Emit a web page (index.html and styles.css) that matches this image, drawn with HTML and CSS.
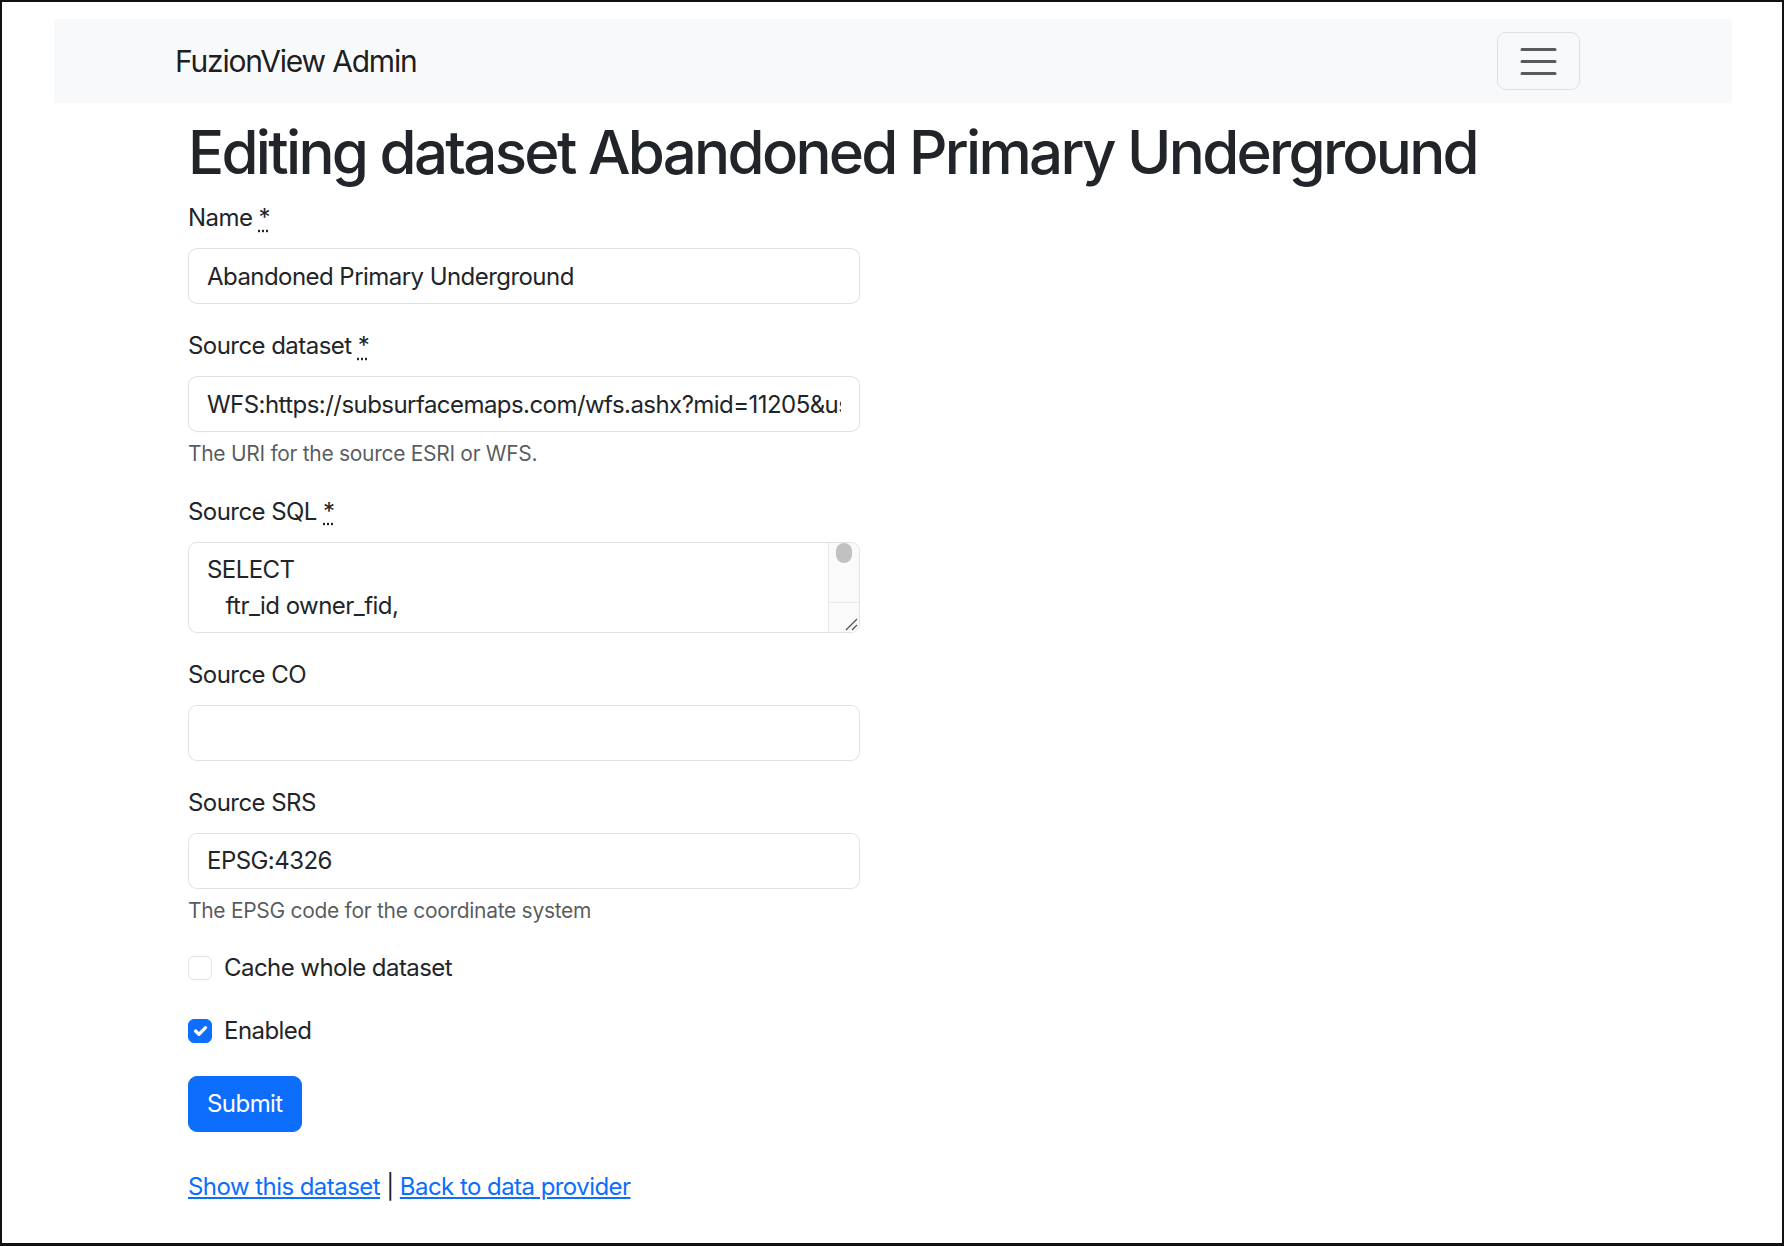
FILE: index.html
```html
<!DOCTYPE html>
<html lang="en">
<head>
<meta charset="utf-8">
<title>FuzionView Admin</title>
<link rel="stylesheet" href="styles.css">
</head>
<body>
<div class="frame">
  <nav class="navbar">
    <a class="brand" href="#">FuzionView Admin</a>
    <button class="toggler" type="button" aria-label="Toggle navigation">
      <svg class="toggler-icon" viewBox="0 0 30 30" width="45" height="45"><path d="M4 7h22M4 15h22M4 23h22" stroke="rgba(33,37,41,0.75)" stroke-width="2" stroke-linecap="round" fill="none"/></svg>
    </button>
  </nav>
  <main class="content">
    <h1 class="title">Editing dataset Abandoned Primary Underground</h1>
    <form class="form">
      <div class="field">
        <label class="label">Name <abbr title="required">*</abbr></label>
        <input class="input" type="text" value="Abandoned Primary Underground">
      </div>
      <div class="field">
        <label class="label">Source dataset <abbr title="required">*</abbr></label>
        <input class="input" type="text" value="WFS:https://subsurfacemaps.com/wfs.ashx?mid=11205&amp;user=fuzionview">
        <div class="help">The URI for the source ESRI or WFS.</div>
      </div>
      <div class="field">
        <label class="label">Source SQL <abbr title="required">*</abbr></label>
        <div class="textarea">
          <div class="ta-text">SELECT
   ftr_id owner_fid,</div>
          <div class="ta-bar">
            <div class="ta-track"><div class="ta-thumb"></div></div>
            <div class="ta-corner">
              <svg class="grip" viewBox="0 0 16 16" width="16" height="16"><path d="M14 3L3 14M14 9L9 14" stroke="#555" stroke-width="1.3" fill="none"/></svg>
            </div>
          </div>
        </div>
      </div>
      <div class="field">
        <label class="label">Source CO</label>
        <input class="input" type="text" value="">
      </div>
      <div class="field">
        <label class="label">Source SRS</label>
        <input class="input" type="text" value="EPSG:4326">
        <div class="help">The EPSG code for the coordinate system</div>
      </div>
      <div class="check-field">
        <div class="check"><span class="box"></span><span>Cache whole dataset</span></div>
      </div>
      <div class="check-field">
        <div class="check"><span class="box box-on"><svg viewBox="0 0 20 20" width="22" height="22"><path d="m6 10 3 3 6-6" stroke="#fff" stroke-width="3" stroke-linecap="round" stroke-linejoin="round" fill="none"/></svg></span><span>Enabled</span></div>
      </div>
      <div class="actions">
        <button class="btn" type="button">Submit</button>
      </div>
    </form>
    <div class="links"><a href="#">Show this dataset</a> | <a href="#">Back to data provider</a></div>
  </main>
</div>
</body>
</html>
```
FILE: styles.css
```css
html, body {
  margin: 0;
  padding: 0;
  background: #fff;
}
body {
  font-family: Inter, "Noto Sans", sans-serif;
  color: #212529;
  font-size: 24px;
  line-height: 36px;
  letter-spacing: -0.55px;
}
.frame {
  box-sizing: border-box;
  width: 1784px;
  height: 1246px;
  border: 2px solid #111;
  border-bottom-width: 3px;
  padding-top: 17px;
  overflow: hidden;
}
.navbar {
  box-sizing: border-box;
  width: 1678px;
  height: 84px;
  margin-left: 52px;
  background: #f8f9fa;
  display: flex;
  align-items: center;
  justify-content: space-between;
  padding: 0 152px 0 121px;
}
.brand {
  font-size: 30px;
  line-height: 45px;
  letter-spacing: -1.2px;
  color: rgba(0, 0, 0, 0.9);
  text-decoration: none;
}
.toggler {
  box-sizing: border-box;
  width: 83px;
  height: 58px;
  padding: 0;
  display: flex;
  align-items: center;
  justify-content: center;
  background: transparent;
  border: 1px solid rgba(0, 0, 0, 0.1);
  border-radius: 9px;
}
.toggler-icon {
  display: block;
}
.content {
  margin-left: 186px;
}
.title {
  font-size: 60px;
  font-weight: 500;
  line-height: 72px;
  letter-spacing: -2.7px;
  margin: 13px 0 12px;
  white-space: nowrap;
}
.form {
  width: 672px;
}
.field {
  margin-bottom: 24px;
}
.check-field {
  padding-bottom: 3px;
  margin-bottom: 24px;
}
.label {
  display: block;
  margin-bottom: 12px;
}
abbr[title] {
  text-decoration: underline dotted;
  text-underline-offset: 4px;
}
.input {
  display: block;
  box-sizing: border-box;
  width: 100%;
  height: 56px;
  padding: 9px 18px;
  margin: 0;
  font-family: inherit;
  font-size: 24px;
  line-height: 36px;
  letter-spacing: -0.55px;
  color: #212529;
  background: #fff;
  border: 1px solid #dee2e6;
  border-radius: 9px;
  outline: none;
}
.help {
  margin-top: 6px;
  font-size: 21px;
  line-height: 31.5px;
  letter-spacing: -0.3px;
  color: rgba(33, 37, 41, 0.75);
}
.textarea {
  box-sizing: border-box;
  height: 91px;
  display: flex;
  border: 1px solid #dee2e6;
  border-radius: 9px;
  overflow: hidden;
  background: #fff;
}
.ta-text {
  flex: 1;
  padding: 9px 18px;
  white-space: pre;
  overflow: hidden;
}
.ta-bar {
  width: 30px;
  display: flex;
  flex-direction: column;
  background: #fafafa;
  border-left: 1px solid #e8e8e8;
}
.ta-track {
  flex: 1;
  display: flex;
  justify-content: center;
}
.ta-thumb {
  width: 16px;
  height: 20px;
  border-radius: 8px;
  background: #c1c1c1;
}
.ta-corner {
  height: 29px;
  border-top: 1px solid #e8e8e8;
  display: flex;
  align-items: flex-end;
  justify-content: flex-end;
}
.grip {
  display: block;
}
.check {
  display: flex;
  align-items: flex-start;
}
.box {
  box-sizing: border-box;
  width: 24px;
  height: 24px;
  margin-top: 6px;
  margin-right: 12px;
  border: 1px solid #dee2e6;
  border-radius: 6px;
  background: #fff;
  display: flex;
  align-items: center;
  justify-content: center;
}
.box-on {
  background: #0d6efd;
  border-color: #0d6efd;
}
.box-on svg {
  display: block;
}
.btn {
  box-sizing: border-box;
  height: 56px;
  padding: 9px 18px;
  font-family: inherit;
  font-size: 24px;
  line-height: 36px;
  letter-spacing: -0.55px;
  color: #fff;
  background: #0d6efd;
  border: 1px solid #0d6efd;
  border-radius: 9px;
}
.links {
  margin-top: 37px;
}
.links a {
  color: #0d6efd;
  text-decoration: underline;
}
```
